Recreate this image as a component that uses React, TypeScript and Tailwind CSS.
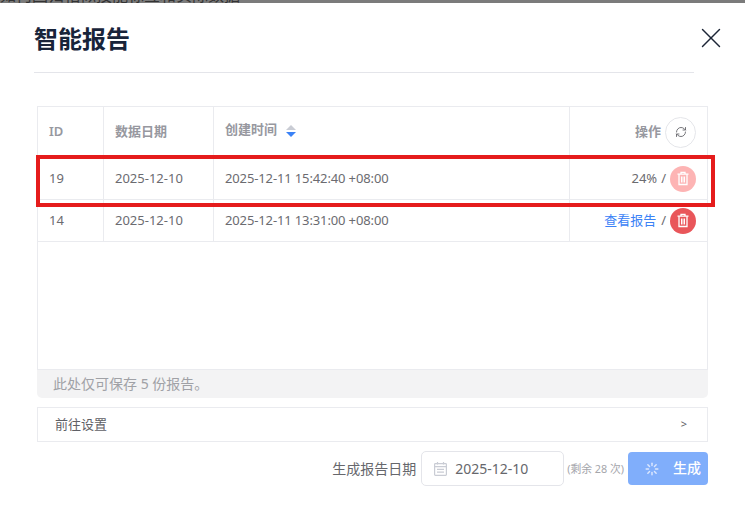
import { Loader, RefreshCw, X } from "lucide-react";

const font = { fontFamily: '"Noto Sans", "Noto Sans CJK SC", sans-serif' };

function TrashIcon() {
  return (
    <svg width="14" height="15" viewBox="0 0 14 15" fill="none" stroke="currentColor" strokeWidth="1.3">
      <path d="M1.5 3.2h11M5 3V1.3h4V3" />
      <path d="M3 3.2v10.3h8V3.2" />
      <path d="M5.5 5.5v6M7 5.5v6M8.5 5.5v6" strokeWidth="1" />
    </svg>
  );
}

function CalendarIcon() {
  return (
    <svg width="13" height="14" viewBox="0 0 13 14" fill="none" stroke="#c9ccd4" strokeWidth="1.2">
      <rect x="0.6" y="1.6" width="11.8" height="11.8" rx="0.8" />
      <path d="M0.6 4.6h11.8M3.5 0v2.4M9.5 0v2.4M3 7.3h7M3 10.2h7" />
    </svg>
  );
}

function Row({ id, time, action, faded }: { id: string; time: string; action: React.ReactNode; faded?: boolean }) {
  return (
    <div className="grid h-[42px] grid-cols-[66px_110px_356px_1fr] items-center border-b border-[#eaebef] text-[13px] text-[#6b6b70]">
      <div className="flex h-full items-center border-r border-[#eaebef] pl-[11px] pt-px">{id}</div>
      <div className="flex h-full items-center border-r border-[#eaebef] pl-[11px] pt-px">2025-12-10</div>
      <div className="flex h-full items-center border-r border-[#eaebef] pl-[11px] pt-px tracking-[-0.13px]">{time}</div>
      <div className="flex h-full items-center justify-end gap-1 pr-[11px]">
        <span className="pt-px">{action}</span>
        <span className="pt-px">/</span>
        <span className={`flex size-[26px] items-center justify-center rounded-full text-white ${faded ? "bg-[#fdb4b4]" : "bg-[#e9565a]"}`}>
          <TrashIcon />
        </span>
      </div>
    </div>
  );
}

export default function App() {
  return (
    <div className="relative h-[517px] w-[745px] overflow-hidden bg-white" style={font}>
      <div className="h-[3px] overflow-hidden bg-[#7b7b7b]">
        <p className="-mt-[15px] text-[16px] leading-5 text-[#333]">如何回归相似技能标签和实际数据</p>
      </div>

      <div className="flex items-start justify-between pl-[34px] pr-[17px] pt-[17px]">
        <h2 className="text-[24px] font-bold leading-[38px] text-[#18243a]">智能报告</h2>
        <button className="mt-px text-[#1c2536]">
          <X size={34} strokeWidth={1} />
        </button>
      </div>
      <div className="ml-[34px] mt-[14px] h-px w-[660px] bg-[#e4e5ea]" />

      <div className="ml-[37px] mt-[33px] w-[671px]">
        <div className="h-[264px] border border-[#eaebef]">
          <div className="grid h-[51px] grid-cols-[66px_110px_356px_1fr] items-center border-b border-[#eaebef] text-[13px] font-semibold text-[#97989f]">
            <div className="flex h-full items-center border-r border-[#eaebef] pl-[11px]">ID</div>
            <div className="flex h-full items-center border-r border-[#eaebef] pl-[11px]">数据日期</div>
            <div className="flex h-full items-center gap-[9px] border-r border-[#eaebef] pb-[4px] pl-[11px]">
              创建时间
              <svg className="mt-[2px]" width="10" height="14" viewBox="0 0 10 14">
                <path d="M5 1 10 6H0z" fill="#c9ccd4" />
                <path d="M5 13 0 8h10z" fill="#3b82f6" />
              </svg>
            </div>
            <div className="flex h-full items-center justify-end gap-[4px] pr-[11px]">
              操作
              <span className="flex size-[31px] items-center justify-center rounded-full border border-[#e5e6ea] text-[#66676c]">
                <RefreshCw size={12} strokeWidth={1.8} />
              </span>
            </div>
          </div>
          <Row id="19" time="2025-12-11 15:42:40 +08:00" action="24%" faded />
          <Row id="14" time="2025-12-11 13:31:00 +08:00" action={<span className="mr-px text-[#3b82f6]">查看报告</span>} />
        </div>

        <div className="flex h-[28px] items-center rounded-b-[5px] bg-[#f3f3f4] pb-[2px] pl-[16px] text-[14px] text-[#a0a1a6]">
          此处仅可保存 5 份报告。
        </div>

        <div className="mt-[9px] flex h-[35px] items-center justify-between border border-[#eaebef] pl-[17px] pr-[20px] text-[13px] text-[#5f6066]">
          <span>前往设置</span>
          <span className="text-[11px]">&gt;</span>
        </div>

        <div className="mt-[9px] flex items-center justify-end">
          <span className="text-[14px] text-[#66676c]">生成报告日期</span>
          <div className="ml-[5px] flex h-[35px] w-[143px] items-center gap-[8px] rounded-[5px] border border-[#e4e5ea] pl-[12px] text-[14px] text-[#66676c]">
            <CalendarIcon />
            2025-12-10
          </div>
          <span className="ml-[3px] mt-[2px] text-[10.8px] text-[#a5a6ab]">(剩余 28 次)</span>
          <button className="ml-[4px] flex h-[33px] w-[80px] items-center rounded-[4px] bg-[#80aefb] pl-[17px] text-[14px] font-medium text-white">
            <Loader size={14} strokeWidth={2.5} className="text-[#dbe7fe]" />
            <span className="ml-[14px] pb-[3px]">生成</span>
          </button>
        </div>
      </div>

      <div className="absolute left-[36px] top-[155px] h-[52px] w-[679px] border-4 border-[#e51c1c]" />
    </div>
  );
}
